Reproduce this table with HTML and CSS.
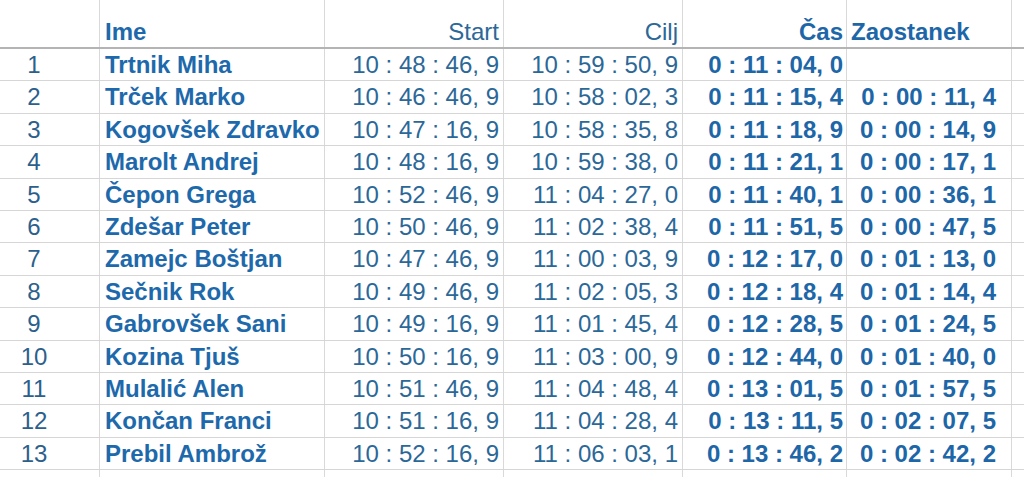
FILE: index.html
```html
<!DOCTYPE html>
<html lang="sl">
<head>
<meta charset="utf-8">
<title>Rezultati</title>
<link rel="stylesheet" href="styles.css">
</head>
<body>
<div class="sheet">
  <div class="row head">
    <div class="c num"></div>
    <div class="c name">Ime</div>
    <div class="c time">Start</div>
    <div class="c time">Cilj</div>
    <div class="c res">Čas</div>
    <div class="c gap hl">Zaostanek</div>
    <div class="c rest"></div>
  </div>
  <div class="row"><div class="c num">1</div><div class="c name">Trtnik Miha</div><div class="c time">10 : 48 : 46, 9</div><div class="c time">10 : 59 : 50, 9</div><div class="c res">0 : 11 : 04, 0</div><div class="c gap"></div><div class="c rest"></div></div>
  <div class="row"><div class="c num">2</div><div class="c name">Trček Marko</div><div class="c time">10 : 46 : 46, 9</div><div class="c time">10 : 58 : 02, 3</div><div class="c res">0 : 11 : 15, 4</div><div class="c gap">0 : 00 : 11, 4</div><div class="c rest"></div></div>
  <div class="row"><div class="c num">3</div><div class="c name">Kogovšek Zdravko</div><div class="c time">10 : 47 : 16, 9</div><div class="c time">10 : 58 : 35, 8</div><div class="c res">0 : 11 : 18, 9</div><div class="c gap">0 : 00 : 14, 9</div><div class="c rest"></div></div>
  <div class="row"><div class="c num">4</div><div class="c name">Marolt Andrej</div><div class="c time">10 : 48 : 16, 9</div><div class="c time">10 : 59 : 38, 0</div><div class="c res">0 : 11 : 21, 1</div><div class="c gap">0 : 00 : 17, 1</div><div class="c rest"></div></div>
  <div class="row"><div class="c num">5</div><div class="c name">Čepon Grega</div><div class="c time">10 : 52 : 46, 9</div><div class="c time">11 : 04 : 27, 0</div><div class="c res">0 : 11 : 40, 1</div><div class="c gap">0 : 00 : 36, 1</div><div class="c rest"></div></div>
  <div class="row"><div class="c num">6</div><div class="c name">Zdešar Peter</div><div class="c time">10 : 50 : 46, 9</div><div class="c time">11 : 02 : 38, 4</div><div class="c res">0 : 11 : 51, 5</div><div class="c gap">0 : 00 : 47, 5</div><div class="c rest"></div></div>
  <div class="row"><div class="c num">7</div><div class="c name">Zamejc Boštjan</div><div class="c time">10 : 47 : 46, 9</div><div class="c time">11 : 00 : 03, 9</div><div class="c res">0 : 12 : 17, 0</div><div class="c gap">0 : 01 : 13, 0</div><div class="c rest"></div></div>
  <div class="row"><div class="c num">8</div><div class="c name">Sečnik Rok</div><div class="c time">10 : 49 : 46, 9</div><div class="c time">11 : 02 : 05, 3</div><div class="c res">0 : 12 : 18, 4</div><div class="c gap">0 : 01 : 14, 4</div><div class="c rest"></div></div>
  <div class="row"><div class="c num">9</div><div class="c name">Gabrovšek Sani</div><div class="c time">10 : 49 : 16, 9</div><div class="c time">11 : 01 : 45, 4</div><div class="c res">0 : 12 : 28, 5</div><div class="c gap">0 : 01 : 24, 5</div><div class="c rest"></div></div>
  <div class="row"><div class="c num">10</div><div class="c name">Kozina Tjuš</div><div class="c time">10 : 50 : 16, 9</div><div class="c time">11 : 03 : 00, 9</div><div class="c res">0 : 12 : 44, 0</div><div class="c gap">0 : 01 : 40, 0</div><div class="c rest"></div></div>
  <div class="row"><div class="c num">11</div><div class="c name">Mulalić Alen</div><div class="c time">10 : 51 : 46, 9</div><div class="c time">11 : 04 : 48, 4</div><div class="c res">0 : 13 : 01, 5</div><div class="c gap">0 : 01 : 57, 5</div><div class="c rest"></div></div>
  <div class="row"><div class="c num">12</div><div class="c name">Končan Franci</div><div class="c time">10 : 51 : 16, 9</div><div class="c time">11 : 04 : 28, 4</div><div class="c res">0 : 13 : 11, 5</div><div class="c gap">0 : 02 : 07, 5</div><div class="c rest"></div></div>
  <div class="row"><div class="c num">13</div><div class="c name">Prebil Ambrož</div><div class="c time">10 : 52 : 16, 9</div><div class="c time">11 : 06 : 03, 1</div><div class="c res">0 : 13 : 46, 2</div><div class="c gap">0 : 02 : 42, 2</div><div class="c rest"></div></div>
  <div class="row filler"><div class="c num"></div><div class="c name"></div><div class="c time"></div><div class="c time"></div><div class="c res"></div><div class="c gap"></div><div class="c rest"></div></div>
</div>
</body>
</html>
```
FILE: styles.css
```css
* { box-sizing: border-box; }
html, body { margin: 0; padding: 0; background: #ffffff; }
body {
  width: 1024px;
  height: 477px;
  overflow: hidden;
  font-family: "Liberation Sans", Arial, sans-serif;
  font-size: 24px;
}
.sheet {
  display: flex;
  flex-direction: column;
  height: 477px;
}
.row {
  display: grid;
  grid-template-columns: 100px 225px 179px 179px 164px 165px 1fr;
  height: 32.4px;
  border-bottom: 1px solid #d6d6d6;
}
.row.head {
  height: 49px;
  border-bottom: 2px solid #b4b4b4;
}
.row.filler {
  flex: 1;
  border-bottom: none;
}
.c {
  border-right: 1px solid #d9d9d9;
  line-height: 32px;
  white-space: nowrap;
  overflow: hidden;
  color: #2a6797;
}
.head .c {
  padding-top: 17px;
  line-height: 30px;
}
.rest { border-right: none; }
.num {
  text-align: center;
  padding-right: 31px;
  color: #2d5f8c;
}
.name {
  padding-left: 5px;
  font-weight: bold;
  color: #1d69ab;
}
.time {
  text-align: right;
  padding-right: 4px;
  color: #2b6898;
}
.res {
  text-align: right;
  padding-right: 3px;
  font-weight: bold;
  color: #1d66a8;
}
.gap {
  text-align: right;
  padding-right: 15px;
  font-weight: bold;
  color: #1d66a8;
}
.gap.hl {
  text-align: left;
  padding-left: 4px;
  padding-right: 0;
}
```
